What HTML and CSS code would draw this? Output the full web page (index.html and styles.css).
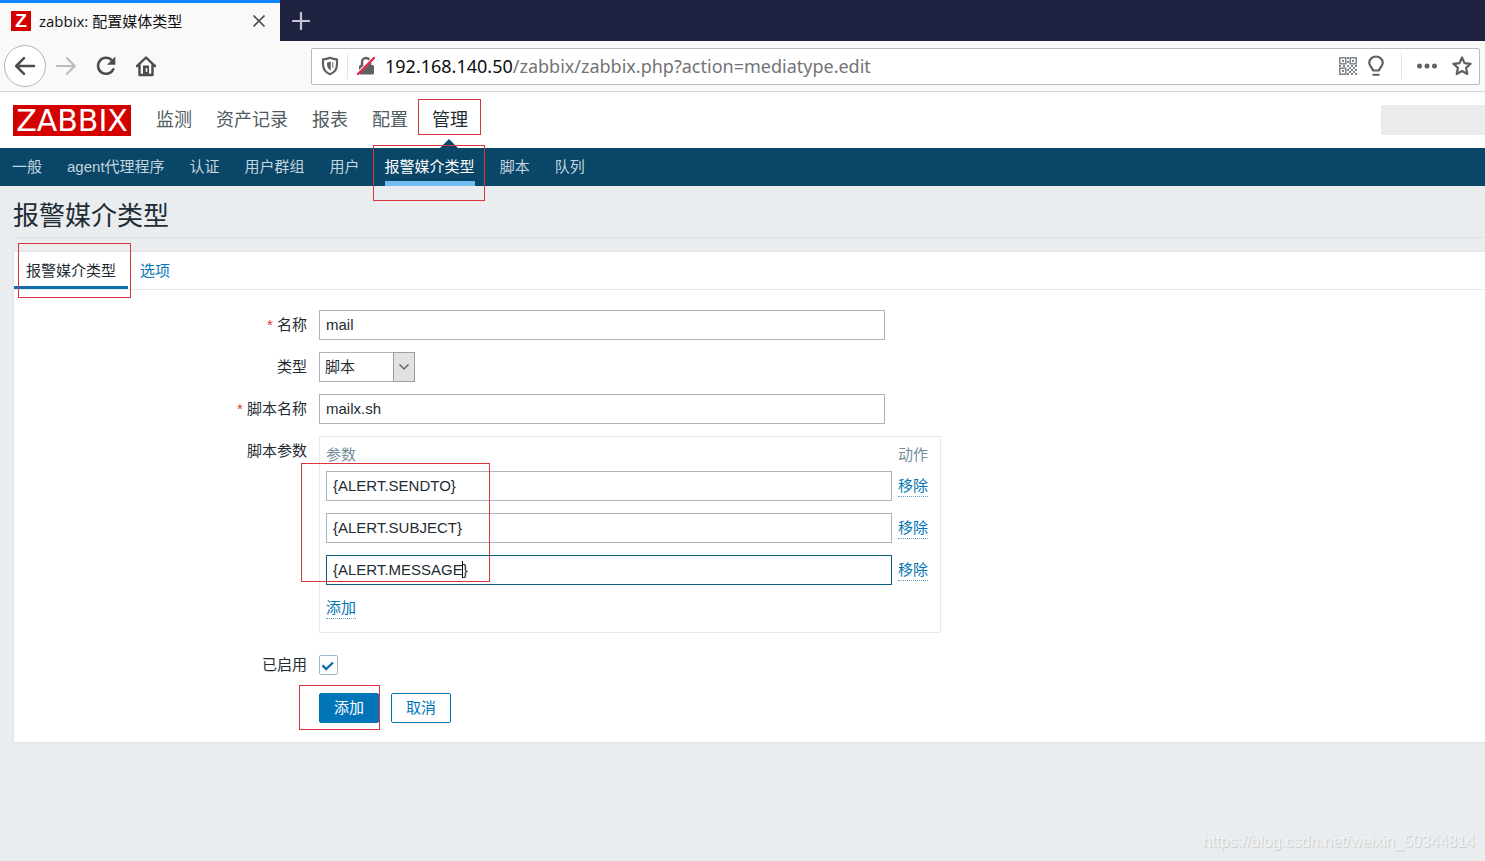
FILE: index.html
```html
<!DOCTYPE html>
<html lang="zh-CN">
<head>
<meta charset="utf-8">
<title>zabbix: 配置媒体类型</title>
<link rel="stylesheet" href="styles.css">
</head>
<body>
<div class="tabbar">
  <div class="tab">
    <span class="favicon">Z</span>
    <span class="tab-title">zabbix: 配置媒体类型</span>
    <button class="icon-btn" type="button" aria-label="关闭标签页">
      <svg width="14" height="14" viewBox="0 0 14 14"><path d="M1.500 1.500l11 11M12.500 1.500l-11 11" fill="none" stroke="#4a4a4f" stroke-width="1.700"/></svg>
    </button>
  </div>
  <button class="icon-btn new-tab" type="button" aria-label="新标签页">
    <svg width="18" height="18" viewBox="0 0 18 18"><path d="M9 1v16M1 9h16" fill="none" stroke="#c4c5d0" stroke-width="2.200" stroke-linecap="round"/></svg>
  </button>
</div>
<div class="toolbar">
  <div class="nav-buttons">
    <button class="icon-btn back" type="button" aria-label="后退">
      <svg width="22" height="20" viewBox="0 0 22 20"><path d="M20 10H2.500M10 2.200L2.200 10l7.800 7.800" fill="none" stroke="#4c4c50" stroke-width="2.500" stroke-linecap="round" stroke-linejoin="round"/></svg>
    </button>
    <button class="icon-btn" type="button" aria-label="前进" disabled>
      <svg width="22" height="20" viewBox="0 0 22 20"><path d="M2 10h17.500M12 2.200l7.800 7.800-7.800 7.800" fill="none" stroke="#bbb" stroke-width="2.200" stroke-linecap="round" stroke-linejoin="round"/></svg>
    </button>
    <button class="icon-btn" type="button" aria-label="刷新">
      <svg width="22" height="22" viewBox="0 0 22 22"><path d="M18.300 14.200A8 8 0 1 1 17 5.500" fill="none" stroke="#4c4c50" stroke-width="2.500" stroke-linecap="round"/><path d="M20.300 1.500v8.300h-8.300z" fill="#4c4c50"/></svg>
    </button>
    <button class="icon-btn" type="button" aria-label="主页">
      <svg width="22" height="22" viewBox="0 0 22 22"><path d="M2 11.200L11 2.500l9 8.700M4.500 10v10h13V10" fill="none" stroke="#4c4c50" stroke-width="2.400" stroke-linecap="round" stroke-linejoin="round"/><path d="M8 10.500h6V20H8z" fill="#4c4c50"/><path d="M11.500 13v4" stroke="#f9f9fa" stroke-width="1.500"/></svg>
    </button>
  </div>
  <div class="urlbar">
    <svg width="18" height="20" viewBox="0 0 18 20"><path d="M9 1.800C6.500 3 4 3.300 2 3.300V8c0 5 2.500 8.500 7 10.200C13.500 16.500 16 13 16 8V3.300C14 3.300 11.500 3 9 1.800z" fill="none" stroke="#606064" stroke-width="2.200" stroke-linejoin="round"/><path d="M9.800 5.500C8.500 6 7.300 6.300 6 6.400V8.500c0 2.800 1.600 4.700 3.800 6z" fill="#606064"/><path d="M11.800 6.200v5.600" stroke="#606064" stroke-width="1"/></svg>
    <span class="divider"></span>
    <svg width="20" height="20" viewBox="0 0 20 20"><path d="M6 9V6a4 4 0 0 1 8 0v3" fill="none" stroke="#606064" stroke-width="2.400"/><rect x="3" y="9" width="15" height="9.500" rx="1.500" fill="#606064"/><path d="M1 18L17 2" stroke="#fff" stroke-width="3"/><path d="M2 18L18 2" stroke="#e22850" stroke-width="2.400" stroke-linecap="round"/></svg>
    <div class="url"><span class="host">192.168.140.50</span>/zabbix/zabbix.php?action=mediatype.edit</div>
    <svg width="18" height="18" viewBox="0 0 18 18"><g fill="none" stroke="#7d858c" stroke-width="1.500"><rect x=".8" y=".8" width="6" height="6"/><rect x="11.200" y=".8" width="6" height="6"/><rect x=".8" y="11.200" width="6" height="6"/></g><path d="M3 3h2v2H3zM13 3h2v2h-2zM3 13h2v2H3zM8 0h2v2H8zM8 4h2v2H8zM0 8h2v2H0zM4 8h2v2H4zM8 8h2v2H8zM12 8h2v2h-2zM16 8h2v2h-2zM10 10h2v2h-2zM14 10h2v2h-2zM8 12h2v2H8zM12 12h2v2h-2zM16 12h2v2h-2zM10 14h2v2h-2zM14 14h2v2h-2zM8 16h2v2H8zM12 16h2v2h-2zM16 16h2v2h-2z" fill="#7d858c"/></svg>
    <svg class="bulb" width="18" height="22" viewBox="0 0 18 22"><path d="M6 15.500c0-2.500-3.800-4-3.800-7.700a6.800 6.300 0 0 1 13.600 0c0 3.700-3.800 5.200-3.800 7.700z" fill="none" stroke="#606064" stroke-width="2.200" stroke-linejoin="round"/><path d="M5.500 19.800h7" stroke="#606064" stroke-width="2"/></svg>
    <span class="divider right"></span>
    <svg class="dots" width="20" height="6" viewBox="0 0 20 6"><g fill="#606064"><circle cx="2.500" cy="3" r="2.500"/><circle cx="10" cy="3" r="2.500"/><circle cx="17.500" cy="3" r="2.500"/></g></svg>
    <svg width="20" height="20" viewBox="0 0 20 20"><path d="M10 1.500l2.500 5.600 6.100.7-4.500 4.100 1.200 6.100-5.300-3-5.300 3 1.200-6.100-4.500-4.100 6.100-.7z" fill="none" stroke="#606064" stroke-width="2.200" stroke-linejoin="round"/></svg>
  </div>
</div>
<header class="header">
  <a class="logo" href="#">ZABBIX</a>
  <nav class="main-nav">
    <a href="#">监测</a>
    <a href="#">资产记录</a>
    <a href="#">报表</a>
    <a href="#">配置</a>
    <a class="selected" href="#">管理<span class="mark mark-nav"></span></a>
  </nav>
  <div class="search-block"></div>
</header>
<nav class="sub-nav">
  <a href="#">一般</a>
  <a href="#">agent代理程序</a>
  <a href="#">认证</a>
  <a href="#">用户群组</a>
  <a href="#">用户</a>
  <a class="selected" href="#">报警媒介类型<span class="mark mark-sub"></span></a>
  <a href="#">脚本</a>
  <a href="#">队列</a>
</nav>
<main class="page">
  <h1>报警媒介类型</h1>
  <section class="card">
    <div class="tabs">
      <a class="selected" href="#">报警媒介类型<span class="mark mark-tab"></span></a>
      <a href="#">选项</a>
    </div>
    <form class="form">
      <label class="required" for="name">名称</label>
      <input class="text" id="name" type="text" value="mail">

      <label for="type">类型</label>
      <div class="select">
        <select id="type"><option>脚本</option></select>
        <span class="arrow"><svg width="12" height="8" viewBox="0 0 12 8"><path d="M1.500 1.500L6 6l4.500-4.500" fill="none" stroke="#555" stroke-width="1.200"/></svg></span>
      </div>

      <label class="required" for="script">脚本名称</label>
      <input class="text" id="script" type="text" value="mailx.sh">

      <span class="label">脚本参数</span>
      <div class="params">
        <table>
          <thead><tr><th>参数</th><th>动作</th></tr></thead>
          <tbody>
            <tr><td><input class="text" type="text" aria-label="参数 1" value="{ALERT.SENDTO}"></td><td><button class="link" type="button">移除</button></td></tr>
            <tr><td><input class="text" type="text" aria-label="参数 2" value="{ALERT.SUBJECT}"></td><td><button class="link" type="button">移除</button></td></tr>
            <tr><td><div class="editing"><input class="text active" type="text" aria-label="参数 3" value="{ALERT.MESSAGE}"><span class="caret"></span></div></td><td><button class="link" type="button">移除</button></td></tr>
          </tbody>
          <tfoot><tr><td colspan="2"><button class="link" type="button">添加</button></td></tr></tfoot>
        </table>
        <span class="mark mark-params"></span>
      </div>

      <label class="enabled" for="enabled">已启用</label>
      <div class="check">
        <input id="enabled" type="checkbox" checked>
        <svg width="14" height="12" viewBox="0 0 14 12"><path d="M1.500 5.300l3.700 3.700L12 2.500" fill="none" stroke="#0f6fad" stroke-width="2.400"/></svg>
      </div>

      <div class="actions">
        <button class="btn primary" type="submit">添加</button>
        <button class="btn" type="button">取消</button>
        <span class="mark mark-submit"></span>
      </div>
    </form>
  </section>
</main>
<div class="watermark">https://blog.csdn.net/weixin_50344814</div>
</body>
</html>
```

FILE: styles.css
```css
* { box-sizing: border-box; }

body {
  margin: 0;
  min-height: 100vh;
  display: flex;
  flex-direction: column;
  background: #e9edf0;
  color: #1f2c33;
  font: 15px/20px "Liberation Sans", "Noto Sans CJK SC", sans-serif;
}

a { color: inherit; text-decoration: none; }
button, input, select { font: inherit; color: inherit; margin: 0; }
svg { display: block; flex: none; }

/* Browser chrome */
.tabbar {
  display: flex;
  height: 41px;
  background: #1f2240;
}
.tab {
  display: flex;
  align-items: center;
  width: 280px;
  padding: 0 10px 2px 11px;
  background: #f9f9fa;
  border-top: 3px solid #0a84ff;
  color: #111;
}
.favicon {
  width: 20px;
  height: 20px;
  margin-right: 8px;
  background: #d40000;
  color: #fff;
  font: bold 19px/20px "Liberation Sans", sans-serif;
  text-align: center;
}
.tab-title { flex: 1; font-size: 15px; font-family: "Open Sans", "Noto Sans CJK SC", sans-serif; }
.icon-btn {
  display: flex;
  align-items: center;
  justify-content: center;
  min-width: 22px;
  padding: 0;
  background: none;
  border: 0;
}
.new-tab { width: 42px; }
.toolbar {
  display: flex;
  align-items: center;
  gap: 154px;
  height: 51px;
  padding: 0 5px 0 4px;
  background: #f9f9fa;
  border-bottom: 1px solid #d8d8d9;
}
.nav-buttons { display: flex; align-items: center; gap: 18px; }
.back {
  width: 42px;
  height: 42px;
  margin-right: -9px;
  background: #fff;
  border: 1px solid #b4b4b6;
  border-radius: 50%;
}
.urlbar {
  display: flex;
  align-items: center;
  flex: 1;
  height: 37px;
  padding: 0 7px 0 9px;
  background: #fff;
  border: 1px solid #b9b9ba;
  border-radius: 2px;
}
.divider { width: 1px; height: 26px; margin: 0 8px; background: #e3e3e4; }
.divider.right { margin: 0 15px 0 16px; }
.bulb { margin-left: 10px; }
.dots { margin-right: 15px; }
.url {
  flex: 1;
  margin-left: 9px;
  color: #737376;
  font: 18px/24px "Noto Sans", sans-serif;
}
.host { color: #0c0c0d; }

/* Header and navigation */
.header {
  display: flex;
  align-items: center;
  height: 56px;
  padding-left: 13px;
  background: #fff;
}
.logo {
  width: 118px;
  height: 31px;
  background: #d40000;
  color: #fff;
  font: 30px/32px "DejaVu Sans", sans-serif;
  text-align: center;
}
.main-nav {
  display: flex;
  align-self: stretch;
  align-items: center;
  flex: 1;
  gap: 24px;
  margin-left: 25px;
  color: #4f5a61;
  font-size: 18px;
  line-height: 56px;
}
.main-nav .selected { position: relative; color: #1f2c33; }
.main-nav .selected::after {
  content: "";
  position: absolute;
  left: 50%;
  bottom: 0;
  margin-left: -10px;
  border: 9px solid transparent;
  border-top: 0;
  border-bottom-color: #0a4668;
}
.search-block { width: 104px; height: 30px; background: #ebebeb; }
.sub-nav {
  display: flex;
  gap: 25px;
  padding: 0 12px;
  background: #0a4668;
  color: #c3d5df;
  line-height: 38px;
}
.sub-nav .selected {
  position: relative;
  color: #fff;
  box-shadow: inset 0 -5px #72bef0;
}

/* Hand-drawn highlight frames laid over the page */
.mark { position: absolute; z-index: 2; border: 1px solid #d9363e; pointer-events: none; }
.mark-nav { left: -14px; right: -13px; top: 7px; bottom: 13px; }
.mark-sub { left: -12px; right: -10px; top: -3px; bottom: -15px; }
.mark-tab { left: 4px; right: -3px; top: -9px; bottom: -9px; }
.mark-params { left: -19px; top: 26px; width: 189px; height: 119px; }
.mark-submit { left: -20px; top: -8px; width: 81px; height: 45px; }

/* Page */
.page { padding-left: 13px; }
h1 {
  margin: 0 0 13px;
  padding: 13px 0 4px;
  border-bottom: 1px solid #dde2e5;
  font-size: 26px;
  font-weight: 400;
  line-height: 34px;
}
.card {
  background: #fff;
  border: 1px solid #dfe4e7;
  border-right: 0;
}
.tabs {
  display: flex;
  border-bottom: 1px solid #e6eaec;
  line-height: 37px;
}
.tabs a { padding: 0 12px; color: #0275b8; }
.tabs .selected {
  position: relative;
  color: #1f2c33;
  box-shadow: inset 0 -3px #0f6fad;
}
.form {
  display: grid;
  grid-template-columns: 293px minmax(0, 1fr);
  column-gap: 12px;
  row-gap: 12px;
  padding: 20px 0 19px;
}
.form > label, .label { line-height: 30px; text-align: right; }
.required::before { content: "* "; color: #e33734; }
.text {
  display: block;
  width: 566px;
  height: 30px;
  padding: 0 6px 2px;
  background: #fff;
  border: 1px solid #acb6bc;
  border-radius: 0;
  outline: 0;
}
.text.active { border-color: #0b5f7f; }
.select { position: relative; width: 96px; height: 30px; }
.select select {
  width: 100%;
  height: 100%;
  padding: 0 24px 0 5px;
  appearance: none;
  background: #fff;
  border: 1px solid #acb6bc;
  border-radius: 0;
}
.arrow {
  position: absolute;
  top: 0;
  right: 0;
  bottom: 0;
  display: flex;
  align-items: center;
  justify-content: center;
  width: 22px;
  background: #e2e2e2;
  border: 1px solid #9a9fa2;
  pointer-events: none;
}
.params {
  position: relative;
  justify-self: start;
  padding: 0 6px 7px;
  border: 1px solid #e8ebed;
}
.params table { border-collapse: collapse; }
.params th {
  height: 28px;
  padding: 7px 6px 0 0;
  color: #768d99;
  font-weight: 400;
  text-align: left;
}
.params td { padding: 6px 6px 6px 0; }
.params tfoot td { height: 34px; }
.editing { position: relative; }
.caret {
  position: absolute;
  left: 136px;
  top: 6px;
  width: 1px;
  height: 17px;
  background: #000;
}
.link {
  display: block;
  padding: 0;
  background: none;
  border: 0;
  border-bottom: 1px dotted #5fa3cc;
  color: #0275b8;
  line-height: 20px;
}
.form > .enabled { margin-top: 10px; line-height: 20px; }
.check { position: relative; width: 19px; height: 20px; margin-top: 10px; }
.check input {
  display: block;
  width: 19px;
  height: 20px;
  appearance: none;
  background: #fff;
  border: 1px solid #9fb9c8;
  border-radius: 2px;
}
.check svg { position: absolute; left: 2px; top: 5px; pointer-events: none; }
.check input:not(:checked) + svg { display: none; }
.actions {
  position: relative;
  grid-column: 2;
  display: flex;
  gap: 12px;
  margin-top: 6px;
}
.btn {
  height: 30px;
  padding: 0 14px;
  background: #fff;
  border: 1px solid #0275b8;
  border-radius: 2px;
  color: #0275b8;
}
.btn.primary { background: #0275b8; color: #fff; }

.watermark {
  margin-top: auto;
  padding: 0 10px 8px 0;
  color: #f1f4f5;
  font-size: 16px;
  line-height: 22px;
  text-align: right;
  text-shadow: 1px 1px 1px #c4c8ca;
}
```
